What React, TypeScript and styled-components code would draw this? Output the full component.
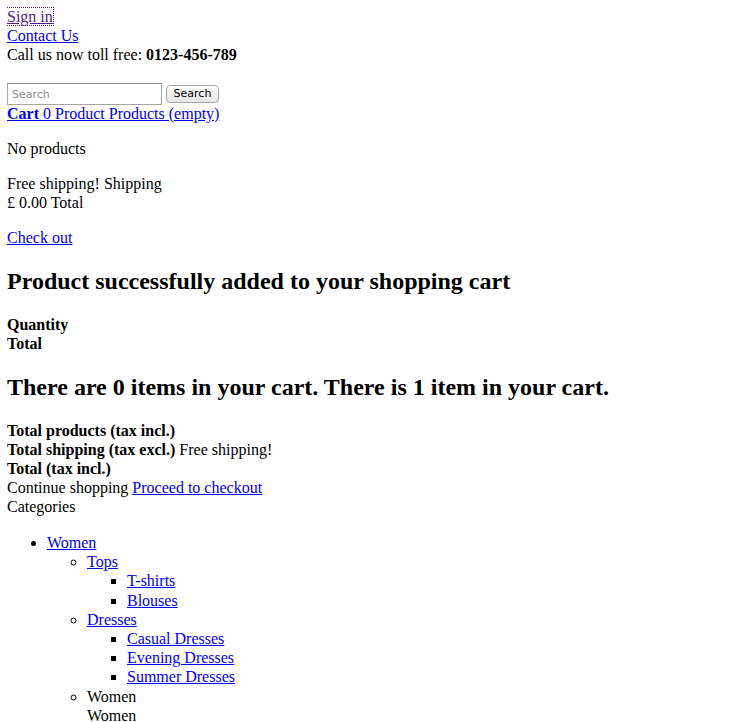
import React from 'react';
import styled, { createGlobalStyle } from 'styled-components';

const GlobalStyle = createGlobalStyle`
  body {
    margin: 7px 8px 8px 7px;
    font-family: 'Liberation Serif', 'Times New Roman', serif;
    font-size: 16px;
    line-height: 19px;
    color: #000;
    background: #fff;
  }
`;

const Link = styled.a<{ $visited?: boolean; $focus?: boolean }>`
  color: ${p => (p.$visited ? '#551a8b' : '#0000ee')};
  text-decoration: underline;
  cursor: pointer;
  outline: ${p => (p.$focus ? '1px dotted #551a8b' : 'none')};
`;

const Line = styled.div``;

const Spacer = styled.div`
  height: 19px;
`;

const SearchForm = styled.form`
  display: flex;
  align-items: center;
  gap: 4px;
  margin: 0;
  height: 21px;
`;

const SearchInput = styled.input`
  box-sizing: border-box;
  width: 155px;
  height: 22px;
  margin: 0;
  padding: 1px 4px 0;
  border: 1px solid #a5a5a5;
  border-top-color: #8e8e8e;
  font-family: 'DejaVu Sans', 'Liberation Sans', sans-serif;
  font-size: 11px;
  color: #000;
  &::placeholder {
    color: #8a8a8a;
  }
`;

const SearchButton = styled.button`
  box-sizing: border-box;
  width: 53px;
  height: 18px;
  padding: 0;
  margin: 0;
  border: 1px solid #a6a6a6;
  border-radius: 4px;
  background: linear-gradient(#ffffff, #f0f0f0 50%, #e6e6e6);
  font-family: 'DejaVu Sans', 'Liberation Sans', sans-serif;
  font-size: 11px;
  color: #000;
`;

const Para = styled.p`
  margin: 16px 0;
`;

const Heading = styled.h2`
  font-size: 24px;
  line-height: 28px;
  font-weight: bold;
  margin: 20px 0;
`;

const List = styled.ul<{ $type: 'disc' | 'circle' | 'square' }>`
  list-style-type: ${p => p.$type};
  margin: ${p => (p.$type === 'disc' ? '17px 0 16px' : '0')};
  padding-left: 40px;
  line-height: 19.2px;
`;

const Plain = styled.span`
  display: block;
`;

export default function App() {
  return (
    <>
      <GlobalStyle />
      <Line>
        <Link $visited $focus>Sign in</Link>
      </Line>
      <Line>
        <Link>Contact Us</Link>
      </Line>
      <Line>
        Call us now toll free: <strong>0123-456-789</strong>
      </Line>
      <Spacer />
      <SearchForm onSubmit={e => e.preventDefault()}>
        <SearchInput type="text" placeholder="Search" />
        <SearchButton type="submit">Search</SearchButton>
      </SearchForm>
      <Line>
        <Link>
          <strong>Cart</strong> 0 Product Products (empty)
        </Link>
      </Line>
      <Para>No products</Para>
      <Line>Free shipping! Shipping</Line>
      <Line>£ 0.00 Total</Line>
      <Para>
        <Link>Check out</Link>
      </Para>
      <Heading>Product successfully added to your shopping cart</Heading>
      <Line>
        <strong>Quantity</strong>
      </Line>
      <Line>
        <strong>Total</strong>
      </Line>
      <Heading>There are 0 items in your cart. There is 1 item in your cart.</Heading>
      <Line>
        <strong>Total products (tax incl.)</strong>
      </Line>
      <Line>
        <strong>Total shipping (tax excl.)</strong> Free shipping!
      </Line>
      <Line>
        <strong>Total (tax incl.)</strong>
      </Line>
      <Line>
        Continue shopping <Link>Proceed to checkout</Link>
      </Line>
      <Line>Categories</Line>
      <List $type="disc">
        <li>
          <Link>Women</Link>
          <List $type="circle">
            <li>
              <Link>Tops</Link>
              <List $type="square">
                <li>
                  <Link>T-shirts</Link>
                </li>
                <li>
                  <Link>Blouses</Link>
                </li>
              </List>
            </li>
            <li>
              <Link>Dresses</Link>
              <List $type="square">
                <li>
                  <Link>Casual Dresses</Link>
                </li>
                <li>
                  <Link>Evening Dresses</Link>
                </li>
                <li>
                  <Link>Summer Dresses</Link>
                </li>
              </List>
            </li>
            <li>
              Women
              <Plain>Women</Plain>
            </li>
          </List>
        </li>
      </List>
    </>
  );
}
